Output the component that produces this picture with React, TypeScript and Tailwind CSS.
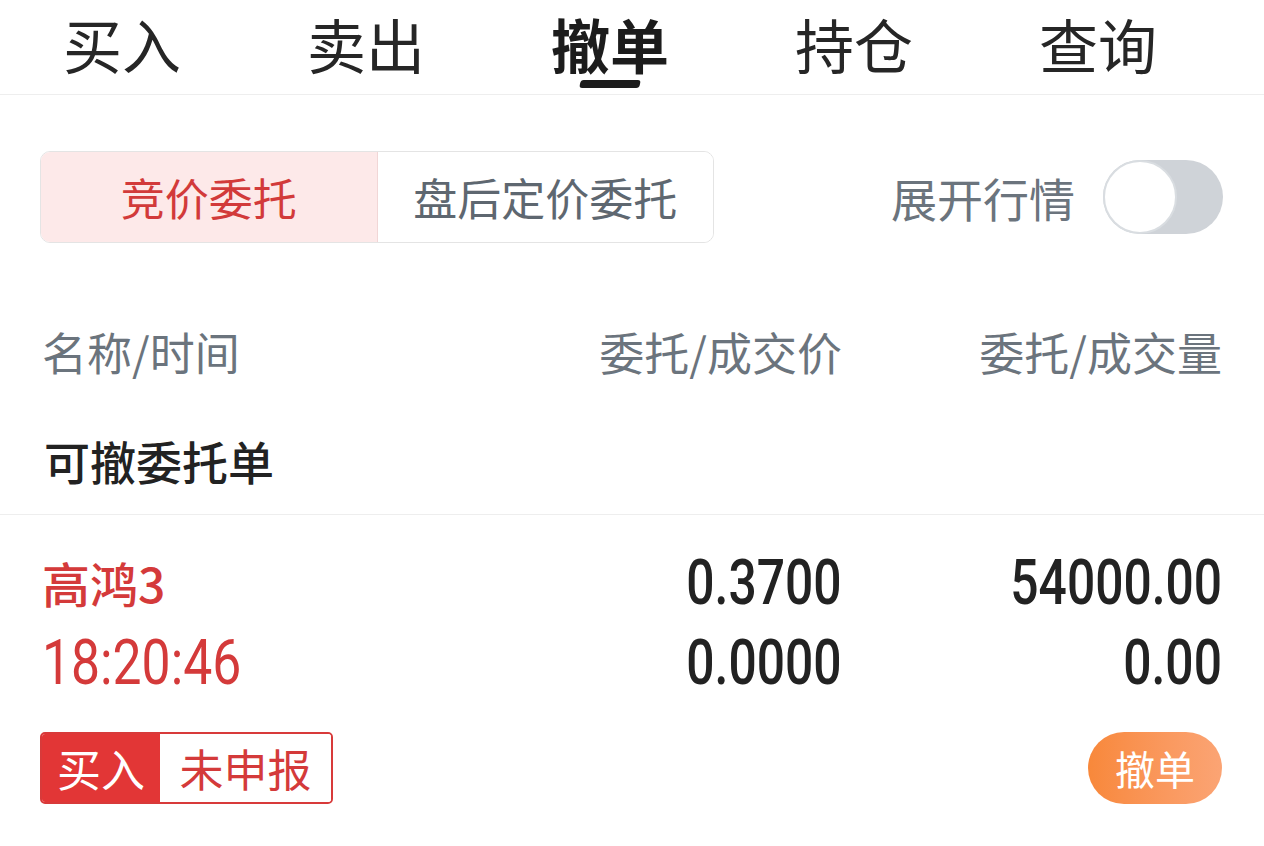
import { ReactElement } from "react";

const tabs = ["买入", "卖出", "撤单", "持仓", "查询"];
const active = "撤单";

const cjk = "font-['Noto_Sans_CJK_SC','Noto_Sans',sans-serif]";
const num = "font-['Roboto','Noto_Sans_CJK_SC',sans-serif]";

export default function App(): ReactElement {
  return (
    <div className={`${cjk} h-[846px] w-[1264px] overflow-hidden bg-white text-[#222222]`}>
      {/* top tabs */}
      <div className="flex h-[95px] border-b border-[#eeeeee] pr-[44px]">
        {tabs.map((t) => (
          <div key={t} className="flex flex-1 flex-col items-center pt-[14px]">
            <span
              className={`text-[59px] leading-none ${
                t === active ? "font-bold text-[#1c1c1c]" : "font-normal text-[#262626]"
              }`}
            >
              {t}
            </span>
            {t === active && (
              <div className="mt-[7px] h-[8px] w-[60px] -skew-x-12 rounded-[3px] bg-[#1c1c1c]" />
            )}
          </div>
        ))}
      </div>

      {/* segment + toggle */}
      <div className="mt-[56px] flex items-center justify-between pl-[40px] pr-[41px]">
        <div className="flex h-[92px] w-[674px] overflow-hidden rounded-[10px] border border-[#e4e4e4]">
          <div className="flex flex-1 items-center justify-center border-r border-[#f1d6d6] bg-[#fde9e9] text-[44px] text-[#d23a3a]">
            竞价委托
          </div>
          <div className="flex flex-1 items-center justify-center bg-white text-[44px] text-[#5e6770]">
            盘后定价委托
          </div>
        </div>
        <div className="flex items-center gap-[28px]">
          <span className="text-[46px] leading-none text-[#6b747d]">展开行情</span>
          <div className="flex h-[74px] w-[120px] items-center rounded-full bg-[#cfd3d8]">
            <div className="h-[74px] w-[74px] rounded-full border-2 border-[#d9dde1] bg-white" />
          </div>
        </div>
      </div>

      {/* column header */}
      <div className="mt-[86px] flex px-[42px] text-[45px] leading-none text-[#6b747d]">
        <span className="flex-1">名称/时间</span>
        <span className="w-[300px] text-right">委托/成交价</span>
        <span className="w-[380px] text-right">委托/成交量</span>
      </div>

      <div className="mt-[63px] px-[44px] text-[46px] font-medium leading-none text-[#222222]">
        可撤委托单
      </div>

      {/* order row */}
      <div className="mt-[31px] border-t border-[#eeeeee] px-[42px] pt-[27px]">
        <div className="flex h-[80px] items-center">
          <span className="flex-1 text-[48px] font-medium leading-none text-[#d43a3a]">高鸿3</span>
          <div className="flex w-[300px] justify-end">
            <span className={`${num} inline-block origin-right scale-x-[0.79] text-[63px] font-medium leading-none`}>
              0.3700
            </span>
          </div>
          <div className="flex w-[380px] justify-end">
            <span className={`${num} inline-block origin-right scale-x-[0.79] text-[63px] font-medium leading-none`}>
              54000.00
            </span>
          </div>
        </div>
        <div className="flex h-[80px] items-center">
          <div className="flex-1">
            <span className={`${num} inline-block origin-left scale-x-[0.82] text-[63px] leading-none text-[#d43a3a]`}>
              18:20:46
            </span>
          </div>
          <div className="flex w-[300px] justify-end">
            <span className={`${num} inline-block origin-right scale-x-[0.79] text-[63px] font-medium leading-none`}>
              0.0000
            </span>
          </div>
          <div className="flex w-[380px] justify-end">
            <span className={`${num} inline-block origin-right scale-x-[0.79] text-[63px] font-medium leading-none`}>
              0.00
            </span>
          </div>
        </div>

        <div className="mt-[30px] flex items-center justify-between">
          <div className="-ml-[2px] flex h-[72px] overflow-hidden rounded-[5px] border-2 border-[#d83a3a]">
            <div className="flex w-[118px] items-center justify-center bg-[#e23636] text-[44px] leading-none text-white">
              买入
            </div>
            <div className="flex w-[171px] items-center justify-center bg-white text-[44px] leading-none text-[#d43a3a]">
              未申报
            </div>
          </div>
          <div className="flex h-[72px] w-[134px] items-center justify-center rounded-full bg-gradient-to-r from-[#f8883a] to-[#fba474] text-[40px] leading-none text-white">
            撤单
          </div>
        </div>
      </div>
    </div>
  );
}
